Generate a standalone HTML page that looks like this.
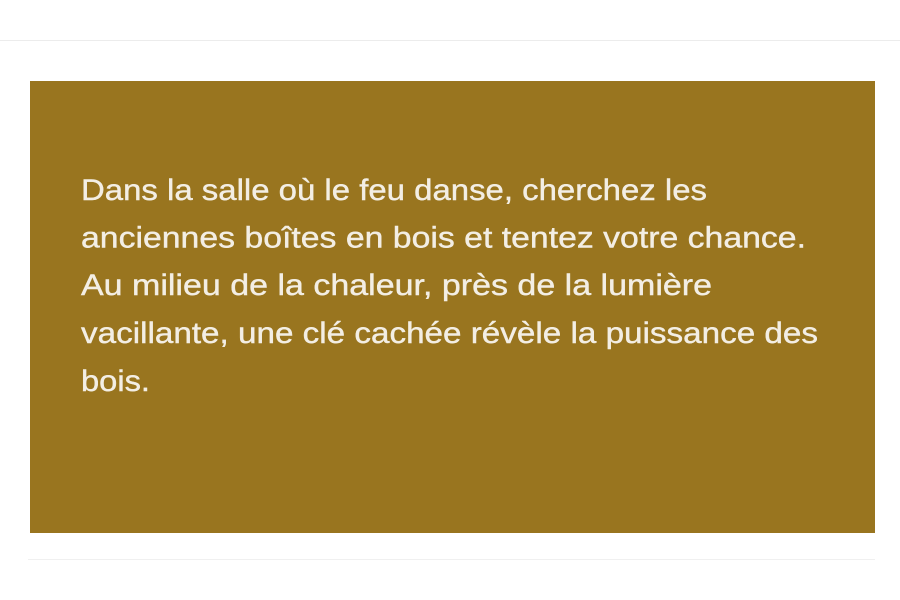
<!DOCTYPE html>
<html><head><meta charset="utf-8"><style>
html,body{margin:0;padding:0;background:#fff;width:900px;height:600px;overflow:hidden}
</style></head><body>
<svg width="900" height="600" xmlns="http://www.w3.org/2000/svg" style="display:block">
<rect x="0" y="40" width="900" height="1" fill="#ececec"/>
<rect x="28" y="559" width="847" height="1" fill="#f0f0f0"/>
<rect x="30" y="81" width="845" height="452" fill="#99751f"/>
<g font-family="Liberation Sans, sans-serif" font-size="30" fill="#f3eee4" stroke="#f3eee4" stroke-width="0.4">
<text x="81" y="200" textLength="626" lengthAdjust="spacingAndGlyphs">Dans la salle où le feu danse, cherchez les</text>
<text x="81" y="247.5" textLength="725" lengthAdjust="spacingAndGlyphs">anciennes boîtes en bois et tentez votre chance.</text>
<text x="81" y="295" textLength="631" lengthAdjust="spacingAndGlyphs">Au milieu de la chaleur, près de la lumière</text>
<text x="81" y="343" textLength="737" lengthAdjust="spacingAndGlyphs">vacillante, une clé cachée révèle la puissance des</text>
<text x="81" y="391" textLength="69" lengthAdjust="spacingAndGlyphs">bois.</text>
</g>
</svg>
</body></html>
